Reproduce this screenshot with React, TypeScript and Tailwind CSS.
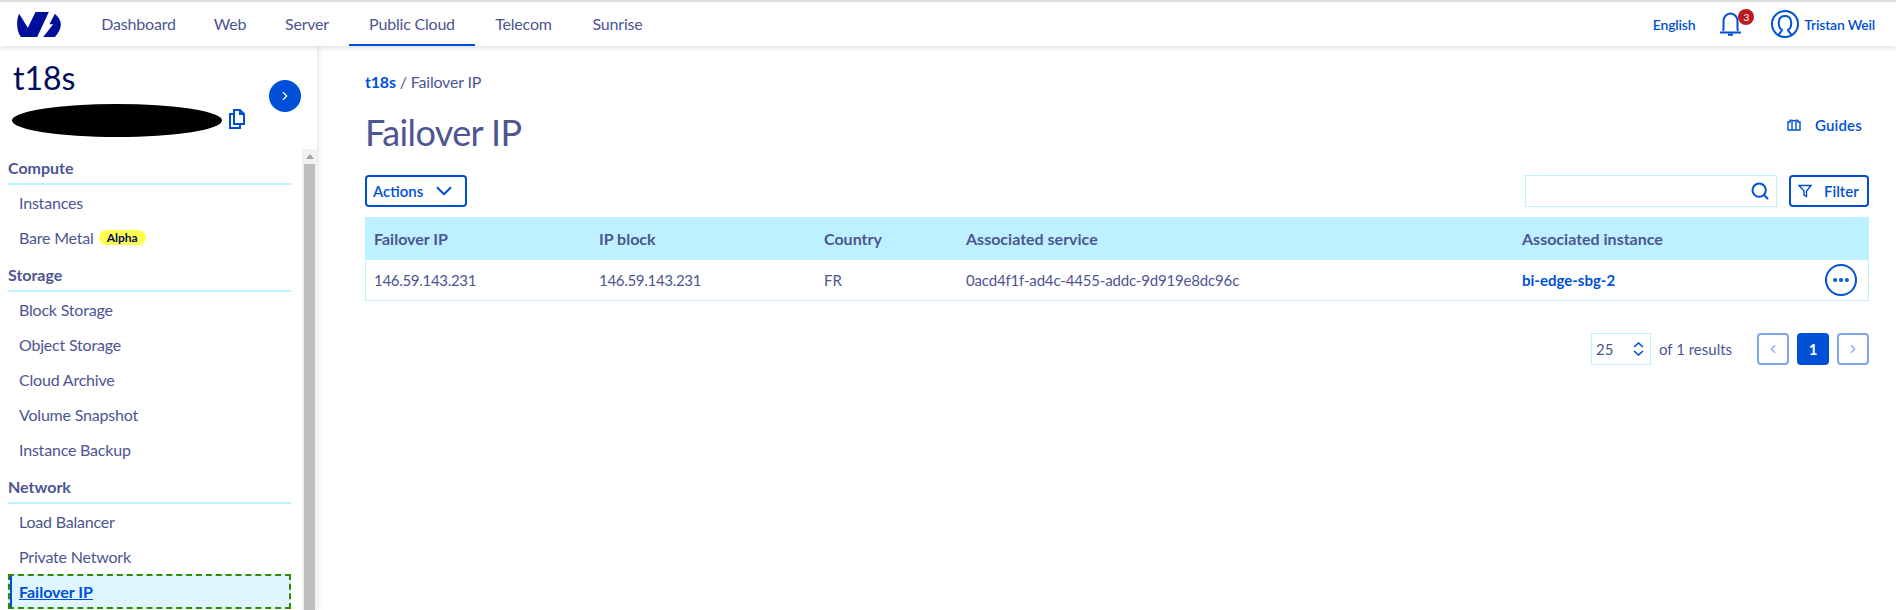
import { ChevronDown, ChevronLeft, ChevronRight, Ellipsis, Search } from "lucide-react";

const navItems = [
  { label: "Dashboard", cls: "w-[113px]" },
  { label: "Web", cls: "w-[70px]" },
  { label: "Server", cls: "w-[84px]" },
  { label: "Public Cloud", cls: "w-[126px] !border-[#0050d7]" },
  { label: "Telecom", cls: "w-[97px]" },
  { label: "Sunrise", cls: "w-[91px]" },
];

function Logo() {
  return (
    <svg width="44" height="25" viewBox="52 35 131 75" className="text-[#000e9c]" fill="currentColor">
      <path d="M58 40 C53 50 52 62 52 72 C52 88 56 100 63 110 L112 110 L147 35 L107 35 L84 82 Z" />
      <path d="M165 40 L149 72 L160 72 L130 110 L165 110 C176 98 183 86 183 72 C183 60 176 50 165 40 Z" />
    </svg>
  );
}

function Header() {
  return (
    <header className="relative z-10 h-[46px] shrink-0 flex items-stretch bg-white border-t-2 border-[#dcdcdc] shadow-[0_2px_6px_rgba(77,85,146,0.18)]">
      <div className="w-[82px] pl-[17px] flex items-center">
        <Logo />
      </div>
      <nav className="flex">
        {navItems.map((item) => (
          <a key={item.label} className={`flex items-center justify-center border-b-2 border-transparent pt-[2px] text-[16px] tracking-[-0.2px] text-[#4d5592] ${item.cls}`}>
            {item.label}
          </a>
        ))}
      </nav>
      <div className="ml-auto flex items-center pr-[21px] text-[14px] font-semibold text-[#0050d7] tracking-[-0.2px]">
        <span className="mr-[24px]">English</span>
        <span className="relative mr-[29px] flex">
          <svg width="23" height="24" viewBox="0 0 23 24" fill="none" stroke="currentColor" strokeWidth="2">
            <path d="M4 19 Q4.5 18 4.5 16 V9 A7 7.5 0 0 1 18.5 9 V16 Q18.5 18 19 19" />
            <path d="M1 20.5 H22 M9 22.8 H14" />
          </svg>
          <span className="absolute -right-[12px] -top-[3px] flex h-[16px] w-[16px] items-center justify-center rounded-full bg-[#bb1c20] text-[10px] font-normal text-white">3</span>
        </span>
        <svg width="28" height="28" viewBox="0 0 28 28" fill="none" stroke="currentColor" strokeWidth="2" className="mr-[5px]">
          <circle cx="14" cy="14" r="13" />
          <path d="M8 25 C8 22 11 22 11 20 C8 18 7.5 14 8 11 C8.5 7.5 11 6 14 6 C17 6 19.5 7.5 20 11 C20.5 14 20 18 17 20 C17 22 20 22 20 25" />
        </svg>
        <span>Tristan Weil</span>
      </div>
    </header>
  );
}

function NavRow({ label, badge }: { label: string; badge?: boolean }) {
  return (
    <a className="flex h-[35px] items-center pl-[11px] text-[16px] tracking-[-0.2px] text-[#4d5592]">
      {label}
      {badge && (
        <span className="ml-[5px] flex h-[15px] items-center rounded-full bg-[#ffff4d] px-[8px] text-[12px] font-bold tracking-normal text-[#000e5c]">Alpha</span>
      )}
    </a>
  );
}

function SectionTitle({ label }: { label: string }) {
  return (
    <div className="flex h-[29px] items-center border-b-2 border-[#bef1ff] pb-[3px] text-[16px] font-bold text-[#4d5592]">{label}</div>
  );
}

function Sidebar() {
  return (
    <aside className="w-[317px] h-full shrink-0 flex flex-col bg-white shadow-[2px_0_4px_rgba(77,85,146,0.12)]">
      <div className="relative h-[103px] shrink-0">
        <div className="pl-[13px] pt-[12px] text-[32px] leading-[40px] text-[#000e5c]">t18s</div>
        {/* masked-out project id */}
        <div className="mt-[6px] ml-[12px] h-[33px] w-[210px] rounded-[50%] bg-black" />
        <svg width="18" height="20" viewBox="0 0 18 20" fill="none" stroke="#0050d7" strokeWidth="2" className="absolute left-[228px] top-[63px]">
          <path d="M6 1 H12 L16 5 V15 H6 Z" />
          <path d="M12 1 V5 H16" />
          <path d="M6 5 H2 V19 H12 V15" />
        </svg>
        <button className="absolute left-[269px] top-[34px] flex h-[32px] w-[32px] items-center justify-center rounded-full bg-[#0050d7] text-white">
          <ChevronRight size={14} strokeWidth={2} />
        </button>
      </div>
      <div className="flex min-h-0 flex-1">
        <div className="w-[283px] ml-[8px] pt-[7px] overflow-hidden">
          <SectionTitle label="Compute" />
          <NavRow label="Instances" />
          <NavRow label="Bare Metal" badge />
          <div className="h-[8px]" />
          <SectionTitle label="Storage" />
          <NavRow label="Block Storage" />
          <NavRow label="Object Storage" />
          <NavRow label="Cloud Archive" />
          <NavRow label="Volume Snapshot" />
          <NavRow label="Instance Backup" />
          <div className="h-[8px]" />
          <SectionTitle label="Network" />
          <NavRow label="Load Balancer" />
          <NavRow label="Private Network" />
          <a className="flex h-[35px] items-center border-2 border-dashed border-[#2e8b00] bg-[#dff6fe] pl-[9px] text-[16px] font-bold text-[#0050d7] underline shadow-[inset_2px_0_0_#0050d7]">
            Failover IP
          </a>
        </div>
        <div className="ml-[11px] w-[15px] flex flex-col items-center bg-[#f1f1f1]">
          <div className="h-[15px] w-full flex items-center justify-center">
            <div className="h-0 w-0 border-x-[4px] border-b-[5px] border-x-transparent border-b-[#a3a3a3]" />
          </div>
          <div className="w-[11px] flex-1 bg-[#bebebe]" />
        </div>
      </div>
    </aside>
  );
}

const columns = ["Failover IP", "IP block", "Country", "Associated service", "Associated instance"];

function Main() {
  return (
    <main className="min-w-0 flex-1 pl-[48px] pr-[27px] text-[#4d5592]">
      <div className="h-[64px] pt-[26px] text-[16px] leading-[20px] tracking-[-0.2px]">
        <span className="font-bold text-[#0050d7]">t18s</span>
        <span className="ml-[4px] mr-[4px]">/</span>
        <span>Failover IP</span>
      </div>
      <div className="flex h-[65px] items-start justify-between">
        <h1 className="text-[36px] leading-[45px] tracking-[-0.6px]">Failover IP</h1>
        <a className="mt-[4px] mr-[7px] flex items-center text-[15px] font-semibold tracking-[0.2px] text-[#0050d7]">
          <svg width="14" height="12" viewBox="0 0 14 12" fill="none" stroke="currentColor" strokeWidth="1.4" className="mr-[14px]">
            <path d="M1 3 H3 V1.5 C4 1 5.5 1 7 2 C8.5 1 10 1 11 1.5 V3 H13 V11 H1 Z" />
            <path d="M5 2 V10.5 M9 2 V10.5" />
          </svg>
          Guides
        </a>
      </div>
      <div className="flex h-[32px] items-center">
        <button className="flex h-[32px] w-[102px] items-center rounded-[4px] border-2 border-[#0050d7] pl-[6px] text-[15px] font-semibold text-[#0050d7]">
          Actions
          <ChevronDown size={26} strokeWidth={1.8} className="ml-[8px]" />
        </button>
        <div className="ml-auto flex h-[32px] w-[252px] items-center justify-end border border-[#bef1ff] pr-[6px] text-[#0050d7]">
          <Search size={20} strokeWidth={2.4} />
        </div>
        <button className="ml-[12px] flex h-[32px] w-[80px] items-center rounded-[4px] border-2 border-[#0050d7] pl-[7px] text-[15px] font-semibold text-[#0050d7]">
          <svg width="14" height="14" viewBox="0 0 14 14" fill="none" stroke="currentColor" strokeWidth="1.4" className="mr-[12px]">
            <path d="M1 1.5 H13 L8.5 7 V12.5 L6 11 V7 Z" />
          </svg>
          Filter
        </button>
      </div>
      <div className="mt-[10px] border-x border-b border-[#bef1ff]">
        <div className="-mx-px grid h-[43px] grid-cols-[225px_225px_142px_556px_1fr] items-center bg-[#bef1ff] pl-[9px] text-[16px] font-bold">
          {columns.map((col) => (
            <div key={col}>{col}</div>
          ))}
        </div>
        <div className="grid h-[40px] grid-cols-[225px_225px_142px_556px_1fr] items-center pl-[8px] text-[15px]">
          <div className="tracking-[-0.3px]">146.59.143.231</div>
          <div className="tracking-[-0.3px]">146.59.143.231</div>
          <div>FR</div>
          <div className="tracking-[-0.17px]">0acd4f1f-ad4c-4455-addc-9d919e8dc96c</div>
          <div className="flex items-center justify-between pr-[11px]">
            <a className="font-bold text-[#0050d7]">bi-edge-sbg-2</a>
            <button className="flex h-[32px] w-[32px] items-center justify-center rounded-full border-2 border-[#0050d7] text-[#0050d7]">
              <Ellipsis size={20} strokeWidth={3} />
            </button>
          </div>
        </div>
      </div>
      <div className="mt-[32px] flex items-center justify-end text-[15px]">
        <div className="flex h-[32px] w-[60px] items-center justify-between border border-[#bef1ff] pl-[4px] pr-[6px]">
          25
          <svg width="11" height="14" viewBox="0 0 11 14" fill="none" stroke="#0050d7" strokeWidth="1.6">
            <path d="M1 5 L5.5 1 L10 5 M1 9 L5.5 13 L10 9" />
          </svg>
        </div>
        <span className="ml-[8px] w-[98px]">of 1 results</span>
        <button className="flex h-[32px] w-[32px] items-center justify-center rounded-[4px] border-2 border-[#7fa7eb] text-[#7fa7eb]">
          <ChevronLeft size={14} strokeWidth={2} />
        </button>
        <button className="ml-[8px] flex h-[32px] w-[32px] items-center justify-center rounded-[4px] bg-[#0050d7] font-bold text-white">1</button>
        <button className="ml-[8px] flex h-[32px] w-[32px] items-center justify-center rounded-[4px] border-2 border-[#7fa7eb] text-[#7fa7eb]">
          <ChevronRight size={14} strokeWidth={2} />
        </button>
      </div>
    </main>
  );
}

export default function App() {
  return (
    <div className="flex h-[610px] flex-col overflow-hidden bg-white font-['Lato',sans-serif]">
      <Header />
      <div className="flex min-h-0 flex-1">
        <Sidebar />
        <Main />
      </div>
    </div>
  );
}
